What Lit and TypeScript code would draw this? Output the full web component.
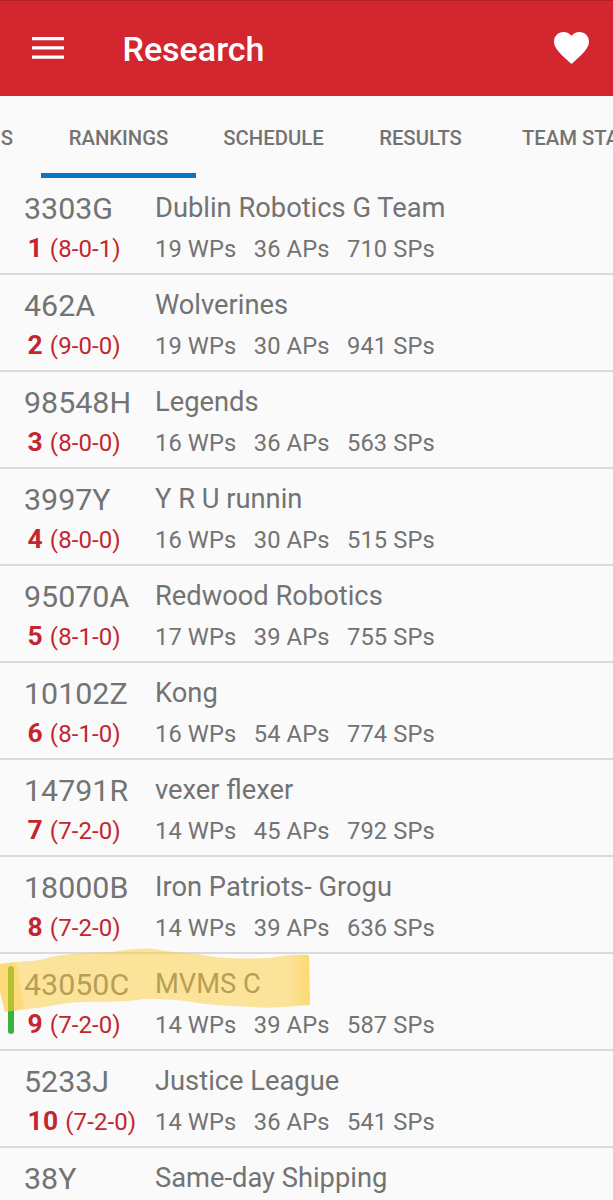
import { LitElement, html, css, svg, nothing } from "lit";
import { customElement, property } from "lit/decorators.js";

interface Team {
  id: string;
  name: string;
  rank?: number;
  record?: string;
  wp?: number;
  ap?: number;
  sp?: number;
  mine?: boolean;
}

const team = (rank: number, id: string, name: string, record: string, wp: number, ap: number, sp: number, mine = false): Team =>
  ({ rank, id, name, record, wp, ap, sp, mine });

const TEAMS: Team[] = [
  team(1, "3303G", "Dublin Robotics G Team", "8-0-1", 19, 36, 710),
  team(2, "462A", "Wolverines", "9-0-0", 19, 30, 941),
  team(3, "98548H", "Legends", "8-0-0", 16, 36, 563),
  team(4, "3997Y", "Y R U runnin", "8-0-0", 16, 30, 515),
  team(5, "95070A", "Redwood Robotics", "8-1-0", 17, 39, 755),
  team(6, "10102Z", "Kong", "8-1-0", 16, 54, 774),
  team(7, "14791R", "vexer flexer", "7-2-0", 14, 45, 792),
  team(8, "18000B", "Iron Patriots- Grogu", "7-2-0", 14, 39, 636),
  team(9, "43050C", "MVMS C", "7-2-0", 14, 39, 587, true),
  team(10, "5233J", "Justice League", "7-2-0", 14, 36, 541),
  { id: "38Y", name: "Same-day Shipping" },
];

@customElement("ranking-row")
class RankingRow extends LitElement {
  @property({ attribute: false }) team!: Team;

  static styles = css`
    :host { display: block; }
    .row {
      position: relative;
      box-sizing: border-box;
      height: 97px;
      border-bottom: 2px solid #dadada;
      display: grid;
      grid-template-columns: 131px 1fr;
      grid-template-rows: 50px 40px;
      padding-left: 24px;
      color: #737373;
      white-space: nowrap;
    }
    .id { font-size: 30.4px; line-height: 62px; }
    .name { font-size: 27.3px; line-height: 60px; }
    .standing { padding-left: 3.5px; color: #c4262f; line-height: 41px; font-size: 24px; letter-spacing: 0.1px; }
    .rank { font-size: 26.4px; font-weight: 700; letter-spacing: 0.3px; margin-right: 0.8px; }
    .stats { display: flex; gap: 17.5px; font-size: 23.7px; line-height: 43px; letter-spacing: 0.1px; }
    .flag {
      position: absolute;
      left: 8px;
      top: 12px;
      width: 6px;
      height: 68px;
      border-radius: 3px;
      background: #35b53c;
    }
    .marker { position: absolute; left: 0; top: -8px; z-index: 1; }
  `;

  render() {
    const t = this.team;
    return html`
      <div class="row">
        <div class="id">${t.id}</div>
        <div class="name">${t.name}</div>
        ${t.rank
          ? html`<div class="standing"><span class="rank">${t.rank}</span> (${t.record})</div>
              <div class="stats"><span>${t.wp} WPs</span><span>${t.ap} APs</span><span>${t.sp} SPs</span></div>`
          : nothing}
        ${t.mine ? html`<div class="flag"></div>${this.marker()}` : nothing}
      </div>
    `;
  }

  private marker() {
    return html`<svg class="marker" width="312" height="68" viewBox="0 0 312 68">
      ${svg`
        <defs>
          <linearGradient id="end" x1="0" x2="1"><stop offset="0" stop-color="#ffc21a" stop-opacity="0"/><stop offset="1" stop-color="#ffc21a" stop-opacity=".3"/></linearGradient>
        </defs>
        <path fill="#ffcd38" fill-opacity=".49" d="M0 18C16 15 32 16 44 13C60 7 90 7 112 6C130 3 144 1 161 4C175 7 193 6 207 10C228 13 250 13 269 12C284 9 296 8 309 9L310 59C292 60 273 63 254 61C230 60 210 59 192 56C174 53 158 53 143 53C120 57 104 55 83 56C68 56 52 60 36 62L5 66L0 46Z"/>
        <path fill="#ffc21a" fill-opacity=".25" d="M0 18L16 16L24 63L5 66L0 46Z"/>
        <path fill="url(#end)" d="M288 9L309 9L310 59L288 60Z"/>
      `}
    </svg>`;
  }
}

@customElement("app-root")
class AppRoot extends LitElement {
  static styles = css`
    :host {
      display: block;
      height: 1200px;
      overflow: hidden;
      background: #fafafa;
      font-family: Roboto, "Liberation Sans", sans-serif;
    }
    .bar {
      box-sizing: border-box;
      height: 96px;
      border-top: 1px solid #b51f28;
      background: #d3262f;
      color: #fff;
      display: flex;
      align-items: center;
      padding: 0 24px 2px 31.7px;
    }
    .title { flex: 1; margin: 3px 0 0 58.8px; font-size: 34px; line-height: 40px; font-weight: 500; }
    .menu, .heart { display: block; }
    .tabs { display: flex; height: 82px; overflow: hidden; margin-left: -50px; }
    .tab {
      box-sizing: border-box;
      flex: none;
      height: 82px;
      padding: 0 27px;
      border-bottom: 5px solid transparent;
      font-size: 20.3px;
      line-height: 85px;
      font-weight: 500;
      color: #737373;
      white-space: nowrap;
      text-align: center;
    }
    .first { width: 91px; padding-right: 28px; text-align: right; }
    .active { width: 155px; border-color: #0b75c2; }
    .schedule { width: 155px; }
    .results { width: 139px; }
    .stats { padding-left: 32px; }
  `;

  render() {
    return html`
      <header class="bar">
        <svg class="menu" width="32" height="22" viewBox="0 0 32 22"><path fill="#fff" d="M0 0h32v3.3H0zM0 9.2h32v3.3H0zM0 18.4h32v3.3H0z"/></svg>
        <div class="title">Research</div>
        <svg class="heart" width="35" height="32" viewBox="2 3 20 18.35" preserveAspectRatio="none"><path fill="#fff" d="M12 21.35l-1.45-1.32C5.4 15.36 2 12.28 2 8.5 2 5.42 4.42 3 7.5 3c1.74 0 3.41.81 4.5 2.09C13.09 3.81 14.76 3 16.5 3 19.58 3 22 5.42 22 8.5c0 3.78-3.4 6.86-8.55 11.54L12 21.35z"/></svg>
      </header>
      <nav class="tabs">
        <div class="tab first">S</div>
        <div class="tab active">RANKINGS</div>
        <div class="tab schedule">SCHEDULE</div>
        <div class="tab results">RESULTS</div>
        <div class="tab stats">TEAM STATS</div>
      </nav>
      <main>${TEAMS.map((t) => html`<ranking-row .team=${t}></ranking-row>`)}</main>
    `;
  }
}
